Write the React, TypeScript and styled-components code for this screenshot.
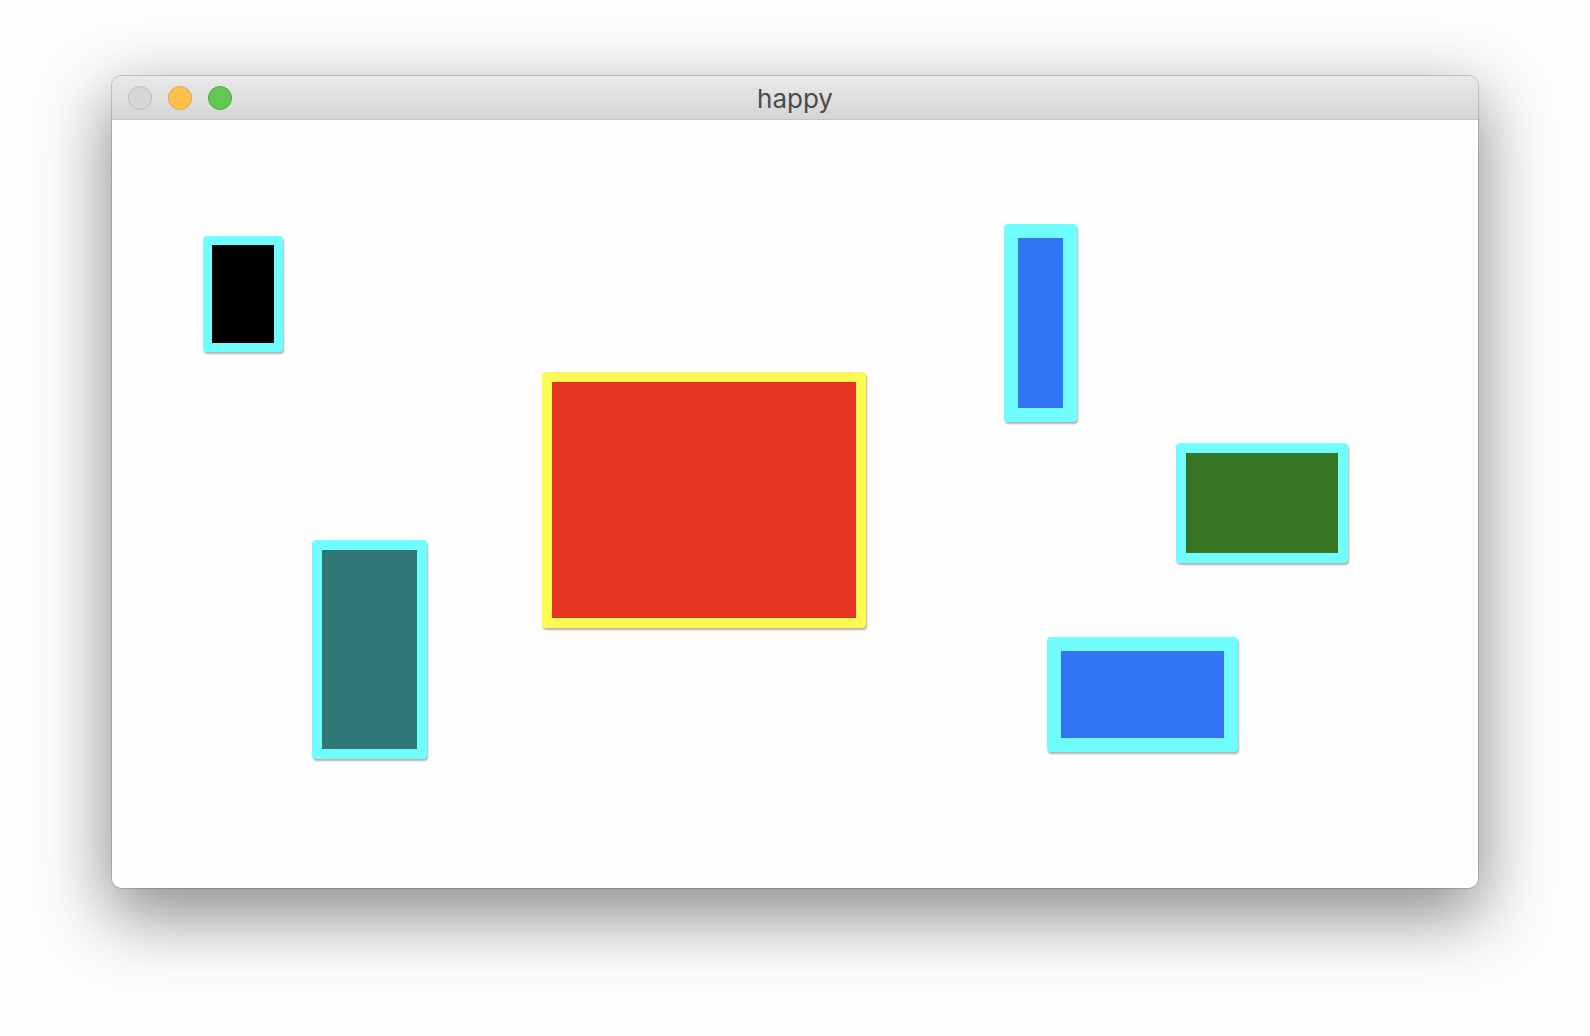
import React from "react";
import styled, { createGlobalStyle } from "styled-components";

const Global = createGlobalStyle`
  html, body { margin: 0; padding: 0; background: #fdfdfd; }
  body { width: 1590px; height: 1036px; overflow: hidden; font-family: Inter, "Noto Sans", sans-serif; }
`;

const Stage = styled.div`
  width: 1590px;
  height: 1036px;
  padding: 76px 0 0 112px;
  box-sizing: border-box;
`;

const Window = styled.div`
  width: 1366px;
  height: 812px;
  border-radius: 10px;
  background: #fefefe;
  overflow: hidden;
  display: flex;
  flex-direction: column;
  box-shadow: 0 0 0 1px rgba(0, 0, 0, 0.16), 0 24px 70px 4px rgba(0, 0, 0, 0.45);
`;

const TitleBar = styled.div`
  position: relative;
  height: 44px;
  flex: none;
  box-sizing: border-box;
  border-bottom: 1px solid #c4c4c4;
  background: linear-gradient(#e9e9e9, #d5d5d5);
  display: flex;
  align-items: center;
  justify-content: center;
`;

const Lights = styled.div`
  position: absolute;
  left: 16px;
  top: 10px;
  display: flex;
  gap: 16px;
`;

const Light = styled.span<{ $fill: string; $edge: string }>`
  width: 24px;
  height: 24px;
  border-radius: 50%;
  box-sizing: border-box;
  background: ${(p) => p.$fill};
  border: 1px solid ${(p) => p.$edge};
`;

const Title = styled.div`
  font-size: 26px;
  color: #4a4a4a;
  line-height: 1;
  margin-top: 3px;
`;

const Canvas = styled.div`
  position: relative;
  flex: 1;
  background: #fefefe;
`;

const Shape = styled.div<{ $fill: string; $edge: string; $bw: number }>`
  position: absolute;
  box-sizing: border-box;
  background: ${(p) => p.$fill};
  border: ${(p) => p.$bw}px solid ${(p) => p.$edge};
  border-radius: 4px;
  box-shadow: 1px 2px 2px rgba(0, 0, 0, 0.3);
`;

const CYAN = "#6ffdfe";

const shapes = [
  { x: 91, y: 116, w: 80, h: 116, bw: 9, fill: "#000000", edge: CYAN },
  { x: 200, y: 420, w: 115, h: 219, bw: 10, fill: "#317677", edge: CYAN },
  { x: 430, y: 252, w: 324, h: 256, bw: 10, fill: "#e93622", edge: "#fefa52" },
  { x: 892, y: 104, w: 73, h: 198, bw: 14, fill: "#3174f6", edge: CYAN },
  { x: 1064, y: 323, w: 172, h: 120, bw: 10, fill: "#367523", edge: CYAN },
  { x: 935, y: 517, w: 191, h: 115, bw: 14, fill: "#3174f6", edge: CYAN },
];

export default function App() {
  return (
    <>
      <Global />
      <Stage>
        <Window>
          <TitleBar>
            <Lights>
              <Light $fill="#d6d6d6" $edge="#bcbcbc" />
              <Light $fill="#fdc04d" $edge="#e0a440" />
              <Light $fill="#62c755" $edge="#4caa40" />
            </Lights>
            <Title>happy</Title>
          </TitleBar>
          <Canvas>
            {shapes.map((s, i) => (
              <Shape
                key={i}
                $fill={s.fill}
                $edge={s.edge}
                $bw={s.bw}
                style={{ left: s.x, top: s.y, width: s.w, height: s.h }}
              />
            ))}
          </Canvas>
        </Window>
      </Stage>
    </>
  );
}
